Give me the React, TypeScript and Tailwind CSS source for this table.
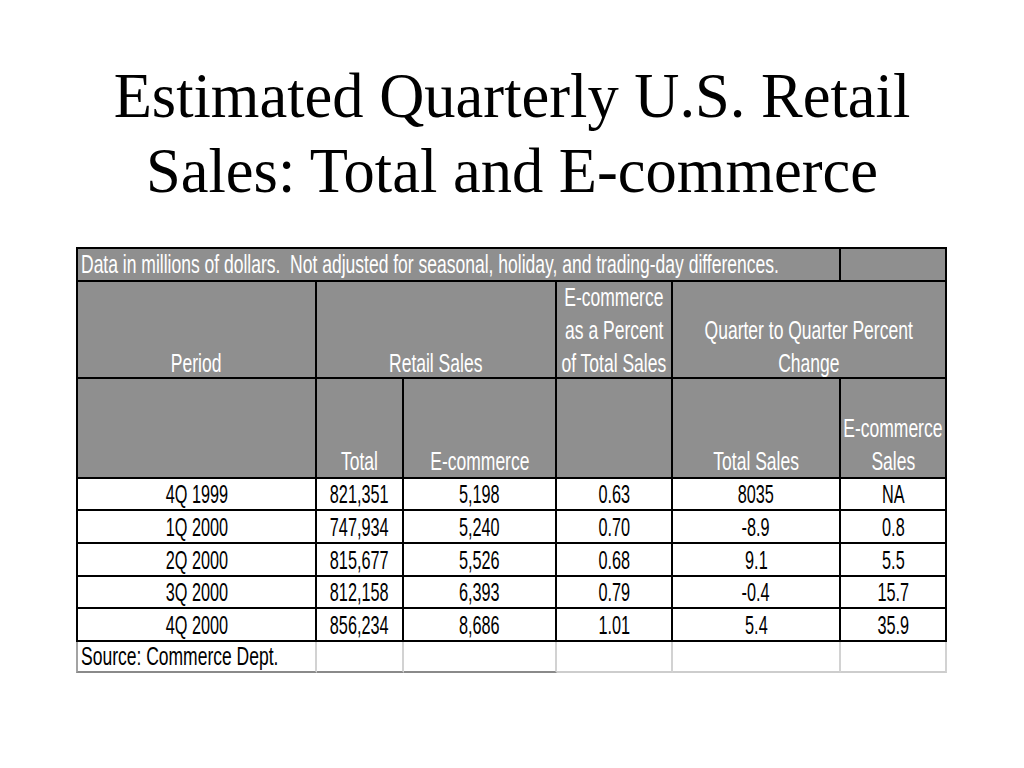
import type { ReactNode } from "react"

// narrow sans: the slide uses a condensed Helvetica, so squeeze Liberation Sans
function T({ children, left }: { children: ReactNode; left?: boolean }) {
  return (
    <span
      className={
        left
          ? "inline-block whitespace-nowrap scale-x-[0.7] origin-left"
          : "inline-block whitespace-nowrap scale-x-[0.7] origin-center"
      }
    >
      {children}
    </span>
  )
}

// digits come out a touch narrower in the original
function N({ children }: { children: ReactNode }) {
  return <span className="inline-block whitespace-nowrap scale-x-[0.65] origin-center">{children}</span>
}

const rows = [
  ["4Q 1999", "821,351", "5,198", "0.63", "8035", "NA"],
  ["1Q 2000", "747,934", "5,240", "0.70", "-8.9", "0.8"],
  ["2Q 2000", "815,677", "5,526", "0.68", "9.1", "5.5"],
  ["3Q 2000", "812,158", "6,393", "0.79", "-0.4", "15.7"],
  ["4Q 2000", "856,234", "8,686", "1.01", "5.4", "35.9"],
]

export default function App() {
  return (
    <div className="w-[1024px] h-[768px] bg-white overflow-hidden">
      {/* Title */}
      <h1 className="pt-[59px] text-center text-[62.5px] leading-[75px] text-black font-normal font-['Liberation_Serif',serif]">
        Estimated Quarterly U.S. Retail
        <br />
        Sales: Total and E-commerce
      </h1>

      <div className="mt-[38px] font-['Liberation_Sans',Arial,sans-serif] text-[25px]">
        {/* Table body with black rules */}
        <div className="ml-[76px] w-[871px] grid grid-cols-[237px_85px_151px_114px_166px_104px] grid-rows-[31px_95px_98px_30px_31px_31px_30px_31px] gap-[2px] bg-black p-[2px]">
          {/* Note row */}
          <div className="col-span-5 bg-[#8f8f8f] text-white flex items-center pl-[3px] leading-[31px]">
            <T left>Data in millions of dollars.&nbsp; Not adjusted for seasonal, holiday, and trading-day differences.</T>
          </div>
          <div className="bg-[#8f8f8f]" />

          {/* Header row 1 */}
          <div className="bg-[#8f8f8f] text-white flex flex-col items-center justify-end leading-[33px]">
            <div className="mb-[-3px]"><T>Period</T></div>
          </div>
          <div className="col-span-2 bg-[#8f8f8f] text-white flex flex-col items-center justify-end leading-[33px]">
            <div className="mb-[-3px]"><T>Retail Sales</T></div>
          </div>
          <div className="bg-[#8f8f8f] text-white flex flex-col items-center justify-end leading-[33px]">
            <div className="mb-[-3px] flex flex-col items-center">
              <T>E-commerce</T>
              <T>as a Percent</T>
              <T>of Total Sales</T>
            </div>
          </div>
          <div className="col-span-2 bg-[#8f8f8f] text-white flex flex-col items-center justify-end leading-[33px]">
            <div className="mb-[-3px] flex flex-col items-center">
              <T>Quarter to Quarter Percent</T>
              <T>Change</T>
            </div>
          </div>

          {/* Header row 2 */}
          <div className="bg-[#8f8f8f]" />
          <div className="bg-[#8f8f8f] text-white flex flex-col items-center justify-end leading-[33px]">
            <div className="mb-[-1px]"><T>Total</T></div>
          </div>
          <div className="bg-[#8f8f8f] text-white flex flex-col items-center justify-end leading-[33px]">
            <div className="mb-[-1px]"><T>E-commerce</T></div>
          </div>
          <div className="bg-[#8f8f8f]" />
          <div className="bg-[#8f8f8f] text-white flex flex-col items-center justify-end leading-[33px]">
            <div className="mb-[-1px]"><T>Total Sales</T></div>
          </div>
          <div className="bg-[#8f8f8f] text-white flex flex-col items-center justify-end leading-[33px]">
            <div className="mb-[-1px] flex flex-col items-center">
              <T>E-commerce</T>
              <T>Sales</T>
            </div>
          </div>

          {/* Data */}
          {rows.map((r) =>
            r.map((v, i) => (
              <div key={r[0] + i} className="bg-white text-black flex items-center justify-center leading-[30px]">
                <N>{v}</N>
              </div>
            ))
          )}
        </div>

        {/* Source row, lighter rules */}
        <div className="ml-[76px] w-[871px] h-[31px] flex">
          <div className="w-[241px] border-l-2 border-l-[#a3a3a3] border-r-2 border-r-[#d2d2d2] border-b-2 border-b-[#8a8a8a] flex items-center pl-[3px] text-black leading-[29px]">
            <T left>Source: Commerce Dept.</T>
          </div>
          <div className="w-[87px] border-r-2 border-r-[#d2d2d2] border-b-2 border-b-[#8a8a8a]" />
          <div className="w-[153px] border-r-2 border-r-[#d2d2d2] border-b-2 border-b-[#8a8a8a]" />
          <div className="w-[116px] border-r-2 border-r-[#d2d2d2] border-b-2 border-b-[#cdcdcd]" />
          <div className="w-[168px] border-r-2 border-r-[#d2d2d2] border-b-2 border-b-[#cdcdcd]" />
          <div className="w-[106px] border-r-2 border-r-[#d2d2d2] border-b-2 border-b-[#cdcdcd]" />
        </div>
      </div>
    </div>
  )
}
